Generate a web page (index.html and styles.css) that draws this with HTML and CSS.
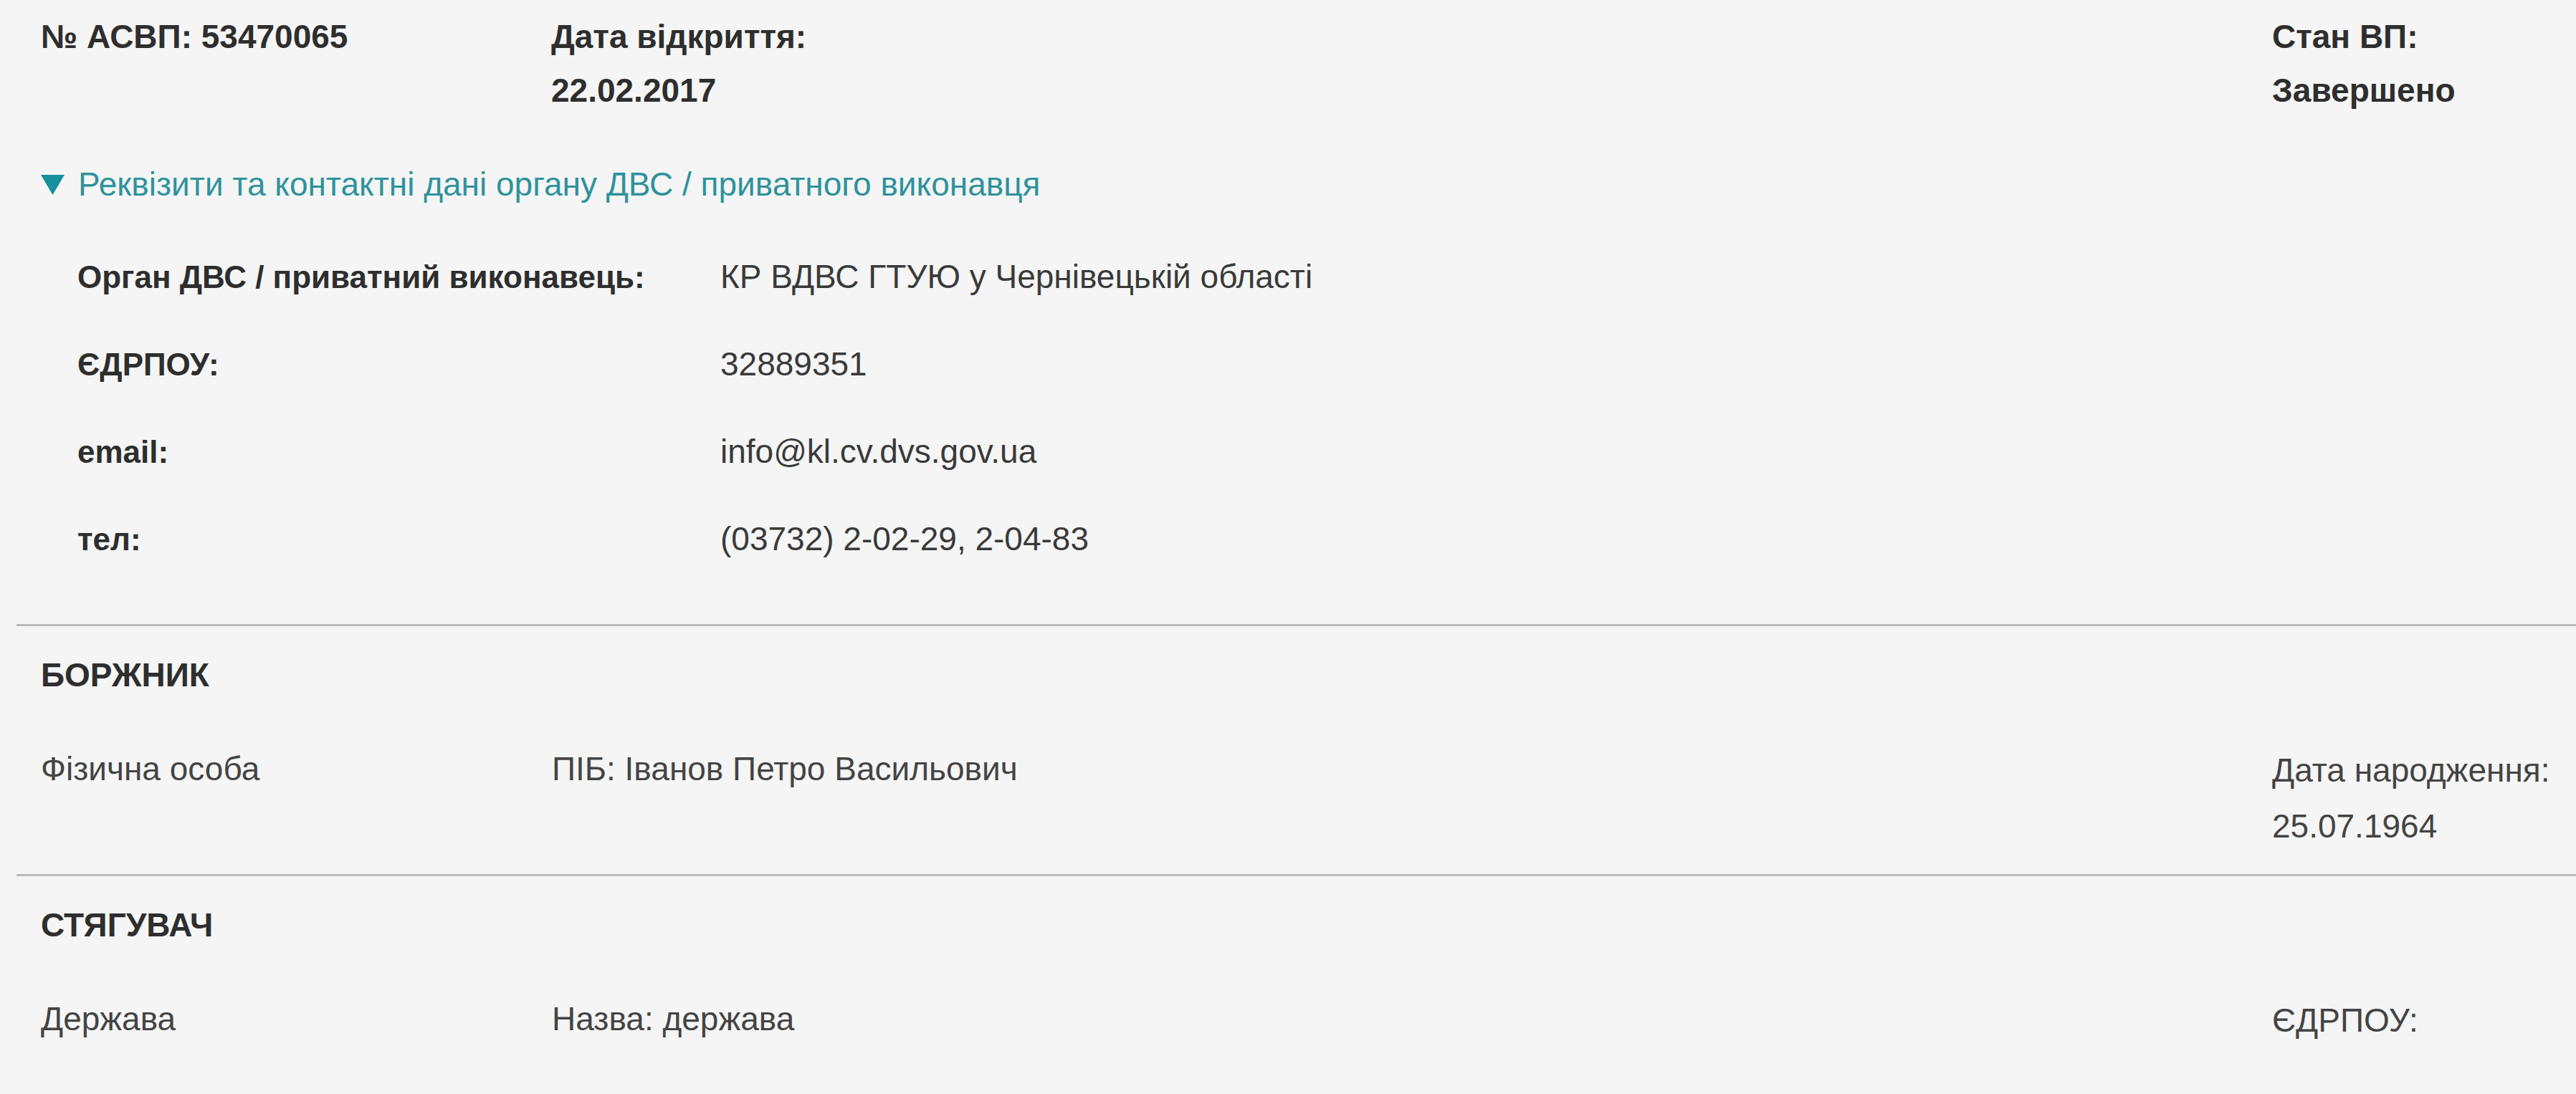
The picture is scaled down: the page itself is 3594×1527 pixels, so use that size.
FILE: index.html
```html
<!DOCTYPE html>
<html lang="uk">
<head>
    <meta charset="UTF-8">
    <meta name="viewport" content="width=device-width, initial-scale=1.0">
    <title>Виконавче провадження</title>
    <link rel="stylesheet" href="styles.css">
</head>
<body>
    <div class="case">
        <div class="case-head">
            <div class="head-item">№ АСВП: 53470065</div>
            <div class="head-item">
                <div>Дата відкриття:</div>
                <div>22.02.2017</div>
            </div>
            <div class="head-item">
                <div>Стан ВП:</div>
                <div>Завершено</div>
            </div>
        </div>

        <div class="toggle">
            <svg class="toggle-arrow" width="33" height="28" viewBox="0 0 33 28">
                <polygon points="0,0 33,0 16.5,28" fill="#16909c"/>
            </svg>
            <span>Реквізити та контактні дані органу ДВС / приватного виконавця</span>
        </div>

        <div class="details">
            <div class="details-label">Орган ДВС / приватний виконавець:</div>
            <div class="details-value">КР ВДВС ГТУЮ у Чернівецькій області</div>
            <div class="details-label">ЄДРПОУ:</div>
            <div class="details-value">32889351</div>
            <div class="details-label">email:</div>
            <div class="details-value">info@kl.cv.dvs.gov.ua</div>
            <div class="details-label">тел:</div>
            <div class="details-value">(03732) 2-02-29, 2-04-83</div>
        </div>

        <div class="party party-debtor">
            <div class="party-title">БОРЖНИК</div>
            <div class="party-row">
                <div class="party-type">Фізична особа</div>
                <div class="party-name">ПІБ: Іванов Петро Васильович</div>
                <div class="party-extra">
                    <div>Дата народження:</div>
                    <div>25.07.1964</div>
                </div>
            </div>
        </div>

        <div class="party">
            <div class="party-title">СТЯГУВАЧ</div>
            <div class="party-row">
                <div class="party-type">Держава</div>
                <div class="party-name">Назва: держава</div>
                <div class="party-extra">
                    <div>ЄДРПОУ:</div>
                </div>
            </div>
        </div>
    </div>
</body>
</html>
```

FILE: styles.css
```css
body {
    margin: 0;
    background-color: #f4f5f4;
    font-family: "Liberation Sans", Arial, sans-serif;
    font-size: 46px;
    line-height: 75px;
    color: #333;
}

.case {
    padding-top: 14px;
}

.case-head {
    display: grid;
    grid-template-columns: 712px 1fr 424px;
    padding-left: 57px;
}

.head-item {
    font-weight: bold;
    color: #2e2e2e;
}

.toggle {
    display: flex;
    align-items: center;
    gap: 19px;
    margin-top: 56px;
    padding-left: 57px;
    color: #2f929d;
    cursor: pointer;
}

.toggle-arrow {
    flex-shrink: 0;
}

.details {
    display: grid;
    grid-template-columns: 897px 1fr;
    row-gap: 47px;
    margin-top: 54px;
    padding-left: 108px;
}

.details-label {
    font-size: 44px;
    font-weight: bold;
    color: #2e2e2e;
}

.details-value {
    color: #3a3a3a;
}

.party {
    margin-left: 23px;
    padding: 31px 0 28px 34px;
    border-top: 3px solid #bbb;
}

.party-debtor {
    margin-top: 81px;
}

.party-title {
    font-weight: bold;
    color: #2e2e2e;
}

.party-row {
    display: grid;
    grid-template-columns: 713px 1fr 424px;
    margin-top: 56px;
    color: #444;
}

.party-extra {
    line-height: 78px;
}
```
